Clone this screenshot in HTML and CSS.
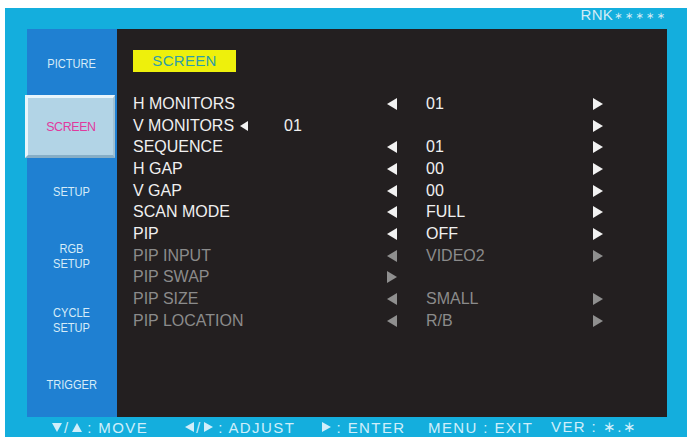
FILE: index.html
```html
<!DOCTYPE html>
<html>
<head>
<meta charset="utf-8">
<link rel="stylesheet" href="styles.css">
</head>
<body>
<div class="frame">
  <div class="topbar"><span class="rnk">RNK</span><span class="stars">∗∗∗∗∗</span></div>
  <div class="main">
    <nav class="sidebar">
      <div class="side-item"><span>PICTURE</span></div>
      <div class="side-item active"><span>SCREEN</span></div>
      <div class="side-item"><span>SETUP</span></div>
      <div class="side-item"><span>RGB<br>SETUP</span></div>
      <div class="side-item"><span>CYCLE<br>SETUP</span></div>
      <div class="side-item"><span>TRIGGER</span></div>
    </nav>
    <section class="panel">
      <div class="tab">SCREEN</div>
      <div class="rows">
        <span class="label">H MONITORS</span><i class="tri left"></i><span class="val">01</span><i class="tri right"></i>
        <span class="label span3">V MONITORS<i class="tri small left"></i><span class="inval">01</span></span><i class="tri right"></i>
        <span class="label">SEQUENCE</span><i class="tri left"></i><span class="val">01</span><i class="tri right"></i>
        <span class="label">H GAP</span><i class="tri left"></i><span class="val">00</span><i class="tri right"></i>
        <span class="label">V GAP</span><i class="tri left"></i><span class="val">00</span><i class="tri right"></i>
        <span class="label">SCAN MODE</span><i class="tri left"></i><span class="val">FULL</span><i class="tri right"></i>
        <span class="label">PIP</span><i class="tri left"></i><span class="val">OFF</span><i class="tri right"></i>
        <span class="label dim">PIP INPUT</span><i class="tri left dim"></i><span class="val dim">VIDEO2</span><i class="tri right dim"></i>
        <span class="label dim">PIP SWAP</span><i class="tri right dim"></i><span class="val"></span><span></span>
        <span class="label dim">PIP SIZE</span><i class="tri left dim"></i><span class="val dim">SMALL</span><i class="tri right dim"></i>
        <span class="label dim">PIP LOCATION</span><i class="tri left dim"></i><span class="val dim">R/B</span><i class="tri right dim"></i>
      </div>
    </section>
  </div>
  <div class="footer">
    <span class="hint"><i class="ft down"></i><span class="sl">/</span><i class="ft up"></i> : MOVE</span>
    <span class="hint"><i class="ft lft"></i><span class="sl">/</span><i class="ft rgt"></i> : ADJUST</span>
    <span class="hint"><i class="ft rgt"></i> : ENTER</span>
    <span class="hint">MENU : EXIT</span>
    <span class="hint">VER : ∗.∗</span>
  </div>
</div>
</body>
</html>
```

FILE: styles.css
```css
html, body {
  margin: 0;
  padding: 0;
  background: #ffffff;
}

body {
  font-family: "Liberation Sans", Arial, sans-serif;
}

.frame {
  margin: 8px 0 0 5px;
  width: 682px;
  height: 429px;
  background: #14aedd;
  display: flex;
  flex-direction: column;
}

.topbar {
  height: 21px;
  display: flex;
  justify-content: flex-end;
  align-items: flex-start;
  padding-right: 20px;
  color: #d3ecf6;
  line-height: 14px;
}

.rnk {
  font-size: 15px;
  letter-spacing: 0.3px;
}

.stars {
  font-family: "DejaVu Sans", sans-serif;
  font-size: 10px;
  letter-spacing: 2.2px;
  margin-left: 1px;
  line-height: 15px;
}

.main {
  height: 388px;
  display: flex;
  margin: 0 20px 0 22px;
}

.sidebar {
  width: 90px;
  background: #1f80d2;
  padding-top: 2px;
  box-sizing: border-box;
  display: flex;
  flex-direction: column;
}

.side-item {
  height: 64.5px;
  display: flex;
  align-items: center;
  justify-content: center;
  text-align: center;
  color: #d6ecf8;
  font-size: 13.5px;
  line-height: 15px;
}

.side-item span {
  display: inline-block;
  transform: scaleX(0.82);
}

.side-item.active {
  height: 63px;
  margin: 0 0 1.5px -2px;
  width: 90px;
  box-sizing: border-box;
  background: #b2d4e6;
  border-top: 3px solid #e8f5fb;
  border-left: 3px solid #e8f5fb;
  border-bottom: 3px solid #86aec6;
  border-right: 2px solid #9fc1d4;
  color: #e03a9e;
}

.side-item.active span {
  transform: scaleX(0.92);
  letter-spacing: -0.4px;
}

.panel {
  width: 550px;
  background: #231f20;
  padding: 21px 0 0 16px;
  box-sizing: border-box;
}

.tab {
  width: 103px;
  height: 22px;
  background: #eef00c;
  color: #2f9ea8;
  font-size: 15px;
  line-height: 22px;
  text-align: center;
  letter-spacing: 0.3px;
}

.rows {
  margin-top: 21px;
  display: grid;
  grid-template-columns: 254px 39px 167px 10px;
  grid-auto-rows: 21.7px;
  align-items: center;
  color: #f0f0f0;
  font-size: 16px;
}

.label, .val {
  line-height: 18px;
  white-space: nowrap;
}

.label.span3 {
  grid-column: 1 / 4;
  display: flex;
  align-items: center;
}

.inval {
  margin-left: 36px;
}

.dim {
  color: #8b8b8b;
}

.tri {
  display: block;
  width: 0;
  height: 0;
  border-top: 6px solid transparent;
  border-bottom: 6px solid transparent;
}

.tri.left {
  border-right: 10px solid #f2f2f2;
}

.tri.right {
  border-left: 10px solid #f2f2f2;
}

.tri.left.dim {
  border-right-color: #8f8f8f;
}

.tri.right.dim {
  border-left-color: #8f8f8f;
}

.tri.small {
  border-top-width: 5px;
  border-bottom-width: 5px;
  border-right-width: 8px;
  margin-left: 6px;
}

.footer {
  height: 20px;
  display: grid;
  grid-template-columns: 133px 137px 106px 123px auto;
  align-items: center;
  padding-left: 47px;
  color: #d0eefa;
  font-size: 15px;
  letter-spacing: 1.4px;
  white-space: nowrap;
}

.hint {
  display: flex;
  align-items: center;
  white-space: pre;
}

.sl {
  margin: 0 2px;
}

.ft {
  display: inline-block;
  width: 0;
  height: 0;
}

.ft.down {
  border-left: 5px solid transparent;
  border-right: 5px solid transparent;
  border-top: 9px solid #d0eefa;
}

.ft.up {
  border-left: 5px solid transparent;
  border-right: 5px solid transparent;
  border-bottom: 9px solid #d0eefa;
}

.ft.lft {
  border-top: 5px solid transparent;
  border-bottom: 5px solid transparent;
  border-right: 9px solid #d0eefa;
}

.ft.rgt {
  border-top: 5px solid transparent;
  border-bottom: 5px solid transparent;
  border-left: 9px solid #d0eefa;
}
```
